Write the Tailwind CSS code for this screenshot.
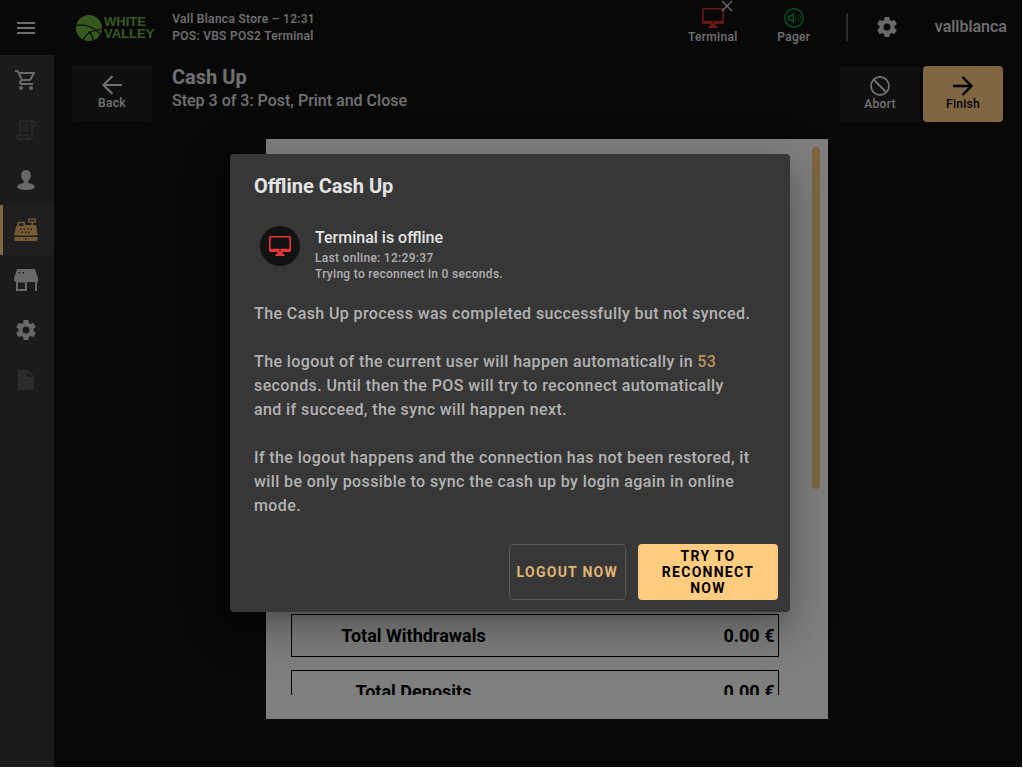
<!DOCTYPE html>
<html lang="en">
<head>
<meta charset="utf-8">
<meta name="viewport" content="width=device-width, initial-scale=1">
<title>Cash Up</title>
<script src="https://cdn.jsdelivr.net/npm/@tailwindcss/browser@4"></script>
</head>
<body class="relative h-screen overflow-hidden border-r border-b border-white bg-[#111111] font-['Roboto',sans-serif] font-medium text-[#e0e0e0]">
<svg class="hidden" aria-hidden="true">
  <symbol id="gear" viewBox="0 0 24 24"><path d="M12 15.5A3.5 3.5 0 0 1 8.5 12 3.5 3.5 0 0 1 12 8.5a3.5 3.5 0 0 1 3.5 3.5 3.5 3.5 0 0 1-3.5 3.5m7.43-2.53c.04-.32.07-.64.07-.97s-.03-.66-.07-1l2.11-1.63c.19-.15.24-.42.12-.64l-2-3.46c-.12-.22-.39-.31-.61-.22l-2.49 1c-.52-.39-1.06-.73-1.69-.98l-.37-2.65A.506.506 0 0 0 14 2h-4c-.25 0-.46.18-.5.42l-.37 2.65c-.63.25-1.17.59-1.69.98l-2.49-1c-.22-.09-.49 0-.61.22l-2 3.46c-.13.22-.07.49.12.64L4.57 11c-.04.34-.07.67-.07 1s.03.65.07.97l-2.11 1.66c-.19.15-.25.42-.12.64l2 3.46c.12.22.39.3.61.22l2.49-1.01c.52.4 1.06.74 1.69.99l.37 2.65c.04.24.25.42.5.42h4c.25 0 .46-.18.5-.42l.37-2.65c.63-.26 1.17-.59 1.69-.99l2.49 1.01c.22.08.49 0 .61-.22l2-3.46c.12-.22.07-.49-.12-.64z"/></symbol>
  <symbol id="monitor" viewBox="0 0 22 20"><path fill-rule="evenodd" d="M1.500 0h19A1.500 1.500 0 0 1 22 1.500v13a1.500 1.500 0 0 1-1.500 1.500H13.500v1.500l2.300 1.300V20H6.200v-1.200l2.300-1.300V16h-7A1.500 1.500 0 0 1 0 14.500v-13A1.500 1.500 0 0 1 1.500 0zM1.600 1.600v11.200h18.800V1.600zM11 13.600a.8.8 0 1 0 0 1.600.8.8 0 0 0 0-1.600z"/></symbol>
</svg>
<div class="flex h-full flex-col">
  <header class="flex h-[55px] shrink-0 items-center pr-[15px]">
    <button class="flex w-[54px] justify-center pr-0.5" aria-label="Menu">
      <svg class="h-3 w-[18px] fill-[#e0e0e0]" viewBox="0 0 18 12"><path d="M0 0h18v2H0zM0 5h18v2H0zM0 10h18v2H0z"/></svg>
    </button>
    <div class="ml-[22px] flex items-center gap-0.5 font-['Liberation_Sans',sans-serif] text-[13px] leading-3 font-bold text-[#6cb33f]">
      <svg class="size-[26px]" viewBox="0 0 26 26"><circle cx="13" cy="13" r="13" fill="#6cb33f"/><path d="M0 10.500c9-2 19 2 25 9.500M7 25c3-6 9-10.500 19-10.500M13 16.500c2 2 4 5 4.500 9" fill="none" stroke="#111" stroke-width="1.200"/></svg>
      <div>WHITE<br>VALLEY</div>
    </div>
    <div class="ml-[18px] text-xs leading-[17px] tracking-wide">Vall Blanca Store – 12:31<br>POS: VBS POS2 Terminal</div>
    <div class="ml-auto flex items-center pb-0.5 text-xs tracking-wide">
      <button class="relative flex w-16 flex-col items-center gap-px">
        <svg class="h-5 w-[22px] fill-[#d32f2f]"><use href="#monitor"/></svg>
        <svg class="absolute -top-2 left-10 size-3 stroke-[#e0e0e0]" viewBox="0 0 12 12" fill="none" stroke-width="1.200"><path d="M1 1l10 10M11 1L1 11"/></svg>
        Terminal
      </button>
      <button class="ml-[17px] flex w-16 flex-col items-center gap-px">
        <svg class="size-5" viewBox="0 0 20 20" fill="none" stroke="#00a651" stroke-width="1.400"><circle cx="10" cy="10" r="9.200"/><path d="M4.500 8.300h1.800L9.300 6v8L6.300 11.700H4.500z"/><path d="M11.500 7.500v5M13.500 6.500c1.500 2 1.500 5 0 7M15.500 6c1.500 2.500 1.500 5.500 0 8" stroke-width="1" stroke-dasharray="1.200 1"/></svg>
        Pager
      </button>
      <div class="ml-5 h-7 w-0.5 bg-[#555]"></div>
      <button class="ml-[27px]" aria-label="Settings"><svg class="size-6 fill-[#d4d4d4]"><use href="#gear"/></svg></button>
      <button class="ml-9 text-base tracking-normal">vallblanca</button>
    </div>
  </header>
  <div class="flex min-h-0 flex-1">
    <nav class="flex w-[54px] shrink-0 flex-col bg-[#363636] fill-[#d0d0d0]">
      <a href="#sale" aria-label="Sale" class="flex h-[50px] items-center justify-center pr-0.5"><svg class="size-6" viewBox="0 0 24 24"><path d="M15.550 13c.75 0 1.410-.41 1.750-1.030l3.580-6.490A.996.996 0 0 0 20.010 4H5.210l-.94-2H1v2h2l3.600 7.590-1.350 2.440C4.520 15.370 5.480 17 7 17h12v-2H7l1.100-2zM6.160 6h12.150l-2.760 5H8.530zM7 18a2 2 0 1 0 0 4 2 2 0 0 0 0-4m10 0a2 2 0 1 0 0 4 2 2 0 0 0 0-4"/></svg></a>
      <a href="#receipts" aria-label="Receipts" class="flex h-[50px] items-center justify-center pr-0.5"><svg class="size-5" viewBox="0 0 20 20" fill="none" stroke="#585858" stroke-width="1.500" stroke-linejoin="round"><path d="M4 14V3a2 2 0 0 1 2-2h11a2 2 0 0 1 2 2v3h-3v11a2 2 0 0 1-2 2H3a2 2 0 0 1-2-2v-2h11v2a2 2 0 0 0 2 2M16 6V3a2 2 0 0 1 1-2M6.500 5h7M6.500 8h7M6.500 11h7"/></svg></a>
      <a href="#customers" aria-label="Customers" class="flex h-[50px] items-center justify-center pr-0.5"><svg class="size-5" viewBox="0 0 20 20"><path d="M10 0c3 0 4.800 2 4.800 5 0 2.600-1 4.600-2.600 6v2c3.800.6 6.600 1.800 6.600 4 0 2-4 3-8.800 3s-8.800-1-8.800-3c0-2.200 2.800-3.400 6.600-4v-2C6.200 9.600 5.200 7.600 5.200 5c0-3 1.800-5 4.800-5z"/></svg></a>
      <a href="#cash" aria-label="Cash register" aria-current="page" class="flex h-[50px] items-center justify-center border-l-[3px] border-[#ffcc80] bg-[#3e3e3e] fill-[#ecb766] pr-[5px]"><svg class="h-6 w-6" viewBox="0 0 24 24"><path fill-rule="evenodd" d="M14 0.500h8v4h-3v2.500h3l1.500 9v1.500H.5V16L2 8h1.500V5a1.200 1.200 0 0 1 1.200-1.200H9.800A1.200 1.200 0 0 1 11 5v2h6.500V4.500H14zM15.200 1.700v1.600h5.600V1.700zM5 5.200V8h4.500V5.200zM6 10.500V12h1.500v-1.500zm3.500 0V12H11v-1.500zm3.500 0V12h1.500v-1.500zm3.500 0V12H18v-1.500zM7.500 13.500V15H9v-1.500zm3.500 0V15h1.500v-1.500zm3.500 0V15H16v-1.500zM.5 19h23v4H.5zM11.300 20.300v1.400h1.400v-1.400z"/></svg></a>
      <a href="#store" aria-label="Store" class="flex h-[50px] items-center justify-center pr-0.5"><svg class="h-[22px] w-6" viewBox="0 0 24 22"><path fill-rule="evenodd" d="M3 0h18l3 9v3.500h-1V22h-2v-9h-8v9H2v-9.500H0V9zM4.500 3v1.500H6V3zM8.500 3v1.500H10V3zM4 13.500V20h7v-6.500z"/></svg></a>
      <a href="#settings" aria-label="Settings" class="flex h-[50px] items-center justify-center pr-0.5"><svg class="size-6"><use href="#gear"/></svg></a>
      <a href="#documents" aria-label="Documents" class="flex h-[50px] items-center justify-center pr-0.5"><svg class="h-5 w-4 fill-[#585858]" viewBox="0 0 16 20"><path fill-rule="evenodd" d="M2 0h8l6 6v12a2 2 0 0 1-2 2H2a2 2 0 0 1-2-2V2a2 2 0 0 1 2-2zm7 1.500V7h5.500z"/></svg></a>
    </nav>
    <main class="flex min-w-0 flex-1 flex-col pt-2.5 pr-[19px] pb-12 pl-[18px]">
      <div class="flex items-start">
        <button class="flex h-14 w-20 flex-col items-center justify-center rounded-sm bg-[#212121] pb-px text-xs tracking-wide">
          <svg class="size-5" viewBox="0 0 20 20" fill="none" stroke="#e0e0e0" stroke-width="2.200"><path d="M20 10H2M10.500 1L1.500 10l9 9"/></svg>
          Back
        </button>
        <div class="ml-5">
          <h1 class="text-xl leading-6 font-bold">Cash Up</h1>
          <p class="text-base leading-6">Step 3 of 3: Post, Print and Close</p>
        </div>
        <div class="mt-px ml-auto flex gap-[3px] text-xs tracking-wide">
          <button class="flex h-14 w-20 flex-col items-center justify-center rounded-sm bg-[#212121] pb-px">
            <svg class="size-5" viewBox="0 0 20 20" fill="none" stroke="#e0e0e0" stroke-width="1.800"><circle cx="10" cy="10" r="9"/><path d="M3.500 3.500l13 13"/></svg>
            Abort
          </button>
          <button class="flex h-14 w-20 flex-col items-center justify-center rounded-sm bg-[#ffcc80] pb-px text-black">
            <svg class="size-5" viewBox="0 0 20 20" fill="none" stroke="#000" stroke-width="2.400"><path d="M0 10h18M9.500 1l9 9-9 9"/></svg>
            Finish
          </button>
        </div>
      </div>
      <section class="mt-[17px] ml-[18px] flex min-h-0 w-[562px] flex-1 self-center bg-white pt-2 pr-2 pb-6 pl-[25px] text-black">
        <div class="flex min-h-0 flex-1 flex-col justify-end overflow-hidden">
          <div class="-mb-[18px] flex flex-col gap-[13px] text-lg font-bold">
            <div class="flex h-[43px] w-[488px] items-center border border-black pr-[3px]"><span class="flex-1 pr-47 text-center">Total Withdrawals</span><span>0.00 €</span></div>
            <div class="flex h-[43px] w-[488px] items-center border border-black pr-[3px]"><span class="flex-1 pr-47 text-center">Total Deposits</span><span>0.00 €</span></div>
          </div>
        </div>
        <div class="h-[342px] w-2 rounded-full bg-[#ffcc80]"></div>
      </section>
    </main>
  </div>
</div>
<div class="absolute inset-0 flex items-center justify-center bg-black/50 pr-0.5 pb-0.5">
  <div role="dialog" aria-modal="true" aria-labelledby="title" class="w-[560px] rounded bg-[#373737] shadow-[0_11px_15px_-7px_rgba(0,0,0,0.2),0_24px_38px_3px_rgba(0,0,0,0.14),0_9px_46px_8px_rgba(0,0,0,0.12)]">
    <h2 id="title" class="px-6 pt-4 text-xl leading-8 font-bold text-[#e4e4e4]">Offline Cash Up</h2>
    <div class="flex px-[30px] pt-6">
      <div class="flex size-10 items-center justify-center rounded-full bg-[#121212]"><svg class="h-5 w-[22px] fill-[#e53935]"><use href="#monitor"/></svg></div>
      <div class="ml-[15px] text-xs leading-4 tracking-wide text-[#b0b0b0]">
        <p class="text-base leading-6 tracking-normal text-[#e4e4e4]">Terminal is offline</p>
        <p>Last online: 12:29:37</p>
        <p>Trying to reconnect in 0 seconds.</p>
      </div>
    </div>
    <div class="flex flex-col gap-6 pt-5 pr-9 pl-6 text-base leading-6 tracking-wide text-[#b3b3b3]">
      <p>The Cash Up process was completed successfully but not synced.</p>
      <p>The logout of the current user will happen automatically in <span class="text-[#b8925c]">53</span> seconds. Until then the POS will try to reconnect automatically and if succeed, the sync will happen next.</p>
      <p>If the logout happens and the connection has not been restored, it will be only possible to sync the cash up by login again in online mode.</p>
    </div>
    <div class="flex justify-end gap-3 px-3 pt-[26px] pb-3 text-sm leading-4 font-bold tracking-[0.09em]">
      <button class="h-14 rounded-sm border border-[#585858] px-[7px] text-[#e0b474]">LOGOUT NOW</button>
      <button class="h-14 w-[140px] rounded-sm bg-[#ffcc80] px-4 text-black">TRY TO RECONNECT NOW</button>
    </div>
  </div>
</div>
</body>
</html>
